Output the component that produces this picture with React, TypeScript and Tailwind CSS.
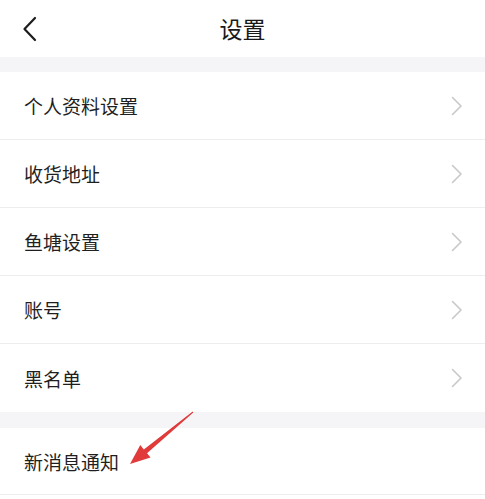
import React from "react";

const items = ["个人资料设置", "收货地址", "鱼塘设置", "账号", "黑名单"];

function Chevron() {
  return (
    <svg width="12" height="20" viewBox="0 0 12 20" fill="none">
      <path d="M1.5 1.5 L10 10 L1.5 18.5" stroke="#c8c8cc" strokeWidth="1.6" strokeLinecap="round" strokeLinejoin="round" />
    </svg>
  );
}

export default function App() {
  return (
    <div
      className="relative w-[485px] h-[499px] overflow-hidden bg-white text-[#1f1f1f]"
      style={{ fontFamily: '"Noto Sans CJK SC", "Noto Sans", sans-serif' }}
    >
      <header className="relative flex h-[57px] items-center justify-center bg-white">
        <svg className="absolute left-[22px] top-[16px]" width="16" height="26" viewBox="0 0 16 26" fill="none">
          <path d="M13 2 L2.5 13 L13 24" stroke="#1c1c1c" strokeWidth="2.2" strokeLinecap="round" strokeLinejoin="round" />
        </svg>
        <h1 className="text-[23px] leading-none text-[#1a1a1a]">设置</h1>
      </header>
      <div className="h-[15px] bg-[#f5f5f7]" />
      <div className="bg-white">
        {items.map((t, i) => (
          <div
            key={t}
            className={`flex h-[68px] items-center justify-between pl-[24px] pr-[22px] ${i < items.length - 1 ? "border-b border-[#ededf0]" : ""}`}
          >
            <span className="text-[19px] leading-none">{t}</span>
            <Chevron />
          </div>
        ))}
      </div>
      <div className="h-[16px] bg-[#f5f5f7]" />
      <div className="flex h-[67px] items-center border-b border-[#ededf0] pl-[24px]">
        <span className="text-[19px] leading-none">新消息通知</span>
      </div>
      <svg className="absolute left-0 top-0 pointer-events-none" width="485" height="499" viewBox="0 0 485 499">
        <polygon
          points="193.3,412.4 147,453.2 150.5,457.5 130,464 140.3,445.1 143.8,449.4 192.7,411.6"
          fill="#e03a3a"
        />
      </svg>
    </div>
  );
}
